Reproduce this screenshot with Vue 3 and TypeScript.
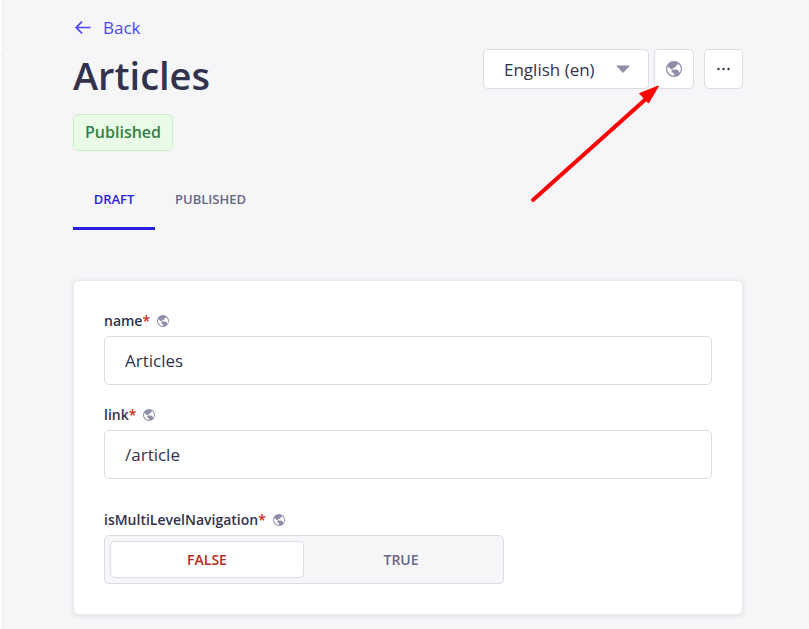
<script setup lang="ts">
import { defineComponent, h, ref } from 'vue'

const GlobeIcon = defineComponent({
  setup: () => () =>
    h('svg', { class: 'globe', viewBox: '0 0 24 24', 'aria-hidden': 'true' }, [
      h('path', {
        fill: 'currentColor',
        'fill-rule': 'evenodd',
        d: 'M12 0a12 12 0 1 0 0 24a12 12 0 0 0 0-24Z M2.7 8.2L8 12.7L10.8 12.4V10.2L14.2 9.4L15 7L17.6 5.8V3.6A10.2 10.2 0 0 1 20.4 17.8L19.2 15.2L16.6 12.8L10.4 13.2L8.4 14.4L8.6 16.6L12 18.8L12.4 22A10.2 10.2 0 0 1 2.7 8.2Z',
      }),
    ]),
})

const locale = ref('en')
const activeTab = ref('draft')
const tabs = [
  { id: 'draft', label: 'DRAFT' },
  { id: 'published', label: 'PUBLISHED' },
]
const fields = ref([
  { id: 'name', value: 'Articles' },
  { id: 'link', value: '/article' },
])
const multiLevel = ref(false)
</script>

<template>
  <div class="shell">
    <aside class="rail"><hr /></aside>
    <main class="page">
      <a class="back" href="#">
        <svg viewBox="0 0 16 14" aria-hidden="true"><path d="M15.5 6.5H1.5M7 .7L1.2 6.5L7 12.3" /></svg>
        <span>Back</span>
      </a>
      <header class="header">
        <h1>Articles</h1>
        <div class="actions">
          <div class="locale">
            <select v-model="locale" aria-label="Locale">
              <option value="en">English (en)</option>
            </select>
            <svg class="caret" viewBox="0 0 14 8" aria-hidden="true"><path d="M0 .5H14L7 8Z" /></svg>
          </div>
          <button class="square" type="button" aria-label="Translate"><GlobeIcon /></button>
          <button class="square more" type="button" aria-label="More actions">
            <svg viewBox="0 0 14 4" aria-hidden="true">
              <circle cx="1.5" cy="2" r="1.2" /><circle cx="6.5" cy="2" r="1.2" /><circle cx="11.5" cy="2" r="1.2" />
            </svg>
          </button>
          <svg class="pointer" viewBox="0 0 130 120" aria-hidden="true">
            <path class="shaft" d="M4 115L118 13" />
            <path class="head" d="M129.5 1L119.5 18L110.5 8.5Z" />
          </svg>
        </div>
      </header>
      <span class="status">Published</span>
      <div class="tabs" role="tablist">
        <button
          v-for="tab in tabs"
          :key="tab.id"
          type="button"
          role="tab"
          :aria-selected="activeTab === tab.id"
          :class="{ active: activeTab === tab.id }"
          @click="activeTab = tab.id"
        >{{ tab.label }}</button>
      </div>
      <form class="card" @submit.prevent>
        <div v-for="field in fields" :key="field.id" class="field">
          <div class="caption">
            <label :for="field.id">{{ field.id }}<span class="required">*</span></label>
            <GlobeIcon />
          </div>
          <input :id="field.id" v-model="field.value" type="text" required />
        </div>
        <div class="field toggle-field">
          <div class="caption">
            <span id="multi-label">isMultiLevelNavigation<span class="required">*</span></span>
            <GlobeIcon />
          </div>
          <div class="toggle" role="group" aria-labelledby="multi-label">
            <button type="button" :class="{ off: !multiLevel }" :aria-pressed="!multiLevel" @click="multiLevel = false">FALSE</button>
            <button type="button" :class="{ on: multiLevel }" :aria-pressed="multiLevel" @click="multiLevel = true">TRUE</button>
          </div>
        </div>
      </form>
    </main>
  </div>
</template>

<style>
body {
  background: #f6f6f9;
}
</style>

<style scoped>
.shell {
  display: flex;
  min-height: 100vh;
  color: #32324d;
  font-family: "Open Sans", "Noto Sans", sans-serif;
  font-size: 17px;
}
.shell * {
  box-sizing: border-box;
}
button,
select,
input {
  font: inherit;
  color: inherit;
}
.rail {
  width: 3px;
  background: #fff;
  border-right: 1px solid #eaeaef;
}
.rail hr {
  height: 1px;
  margin: 54px 0 0;
  border: 0;
  background: #eaeaef;
}
.page {
  flex: 1;
  min-width: 0;
  padding: 16px 66px 14px 70px;
}
.back {
  display: flex;
  width: max-content;
  align-items: center;
  gap: 12px;
  padding-left: 2px;
  line-height: 24px;
  color: #4945ff;
  text-decoration: none;
}
.back svg {
  width: 16px;
  height: 14px;
  fill: none;
  stroke: currentColor;
  stroke-width: 1.7;
}
.header {
  display: flex;
  justify-content: space-between;
  align-items: flex-start;
  padding-top: 9px;
}
h1 {
  margin: 0;
  font-size: 38px;
  font-weight: 600;
  line-height: 52px;
}
.actions {
  position: relative;
  display: flex;
}
.locale {
  position: relative;
  margin-right: 5px;
}
.locale select {
  width: 166px;
  height: 40px;
  padding: 0 20px;
  appearance: none;
  background: #fff;
  border: 1px solid #dcdce4;
  border-radius: 5px;
}
.caret {
  position: absolute;
  top: 16px;
  right: 19px;
  width: 14px;
  height: 8px;
  fill: #8e8ea9;
  pointer-events: none;
}
.square {
  display: flex;
  width: 40px;
  height: 40px;
  padding: 0;
  align-items: center;
  justify-content: center;
  background: #fff;
  border: 1px solid #dcdce4;
  border-radius: 5px;
}
.more {
  width: 39px;
  margin-left: 10px;
}
.more svg {
  width: 14px;
  height: 4px;
  fill: #32324d;
}
.globe {
  flex: none;
  width: 12px;
  height: 12px;
  color: #8e8ea9;
}
.square .globe {
  width: 16px;
  height: 16px;
}
.pointer {
  position: absolute;
  top: 36px;
  right: 84px;
  width: 130px;
  height: 120px;
  pointer-events: none;
}
.shaft {
  fill: none;
  stroke: #f00;
  stroke-width: 4;
  stroke-linecap: round;
}
.head {
  fill: #f00;
  stroke: #f00;
}
.status {
  display: block;
  width: max-content;
  margin-top: 13px;
  padding: 0 11px;
  border: 1px solid #c6f0c2;
  border-radius: 5px;
  background: #eafbe7;
  color: #328048;
  font-size: 16px;
  font-weight: 600;
  line-height: 35px;
}
.tabs {
  display: flex;
  margin-top: 19px;
}
.tabs button {
  min-width: 82px;
  height: 60px;
  padding: 0 20px;
  border: 0;
  border-bottom: 3px solid transparent;
  background: none;
  color: #666687;
  font-size: 13px;
  font-weight: 600;
}
.tabs button.active {
  border-color: #271fe0;
  color: #271fe0;
}
.card {
  margin-top: 50px;
  padding: 30px;
  border: 1px solid #eaeaef;
  border-radius: 5px;
  background: #fff;
  box-shadow: 0 1px 5px rgba(33, 33, 52, 0.1);
}
.field + .field {
  margin-top: 20px;
}
.field.toggle-field {
  margin-top: 31px;
}
.caption {
  display: flex;
  align-items: center;
  gap: 7px;
  margin-bottom: 5px;
  font-size: 14px;
  font-weight: 600;
  line-height: 20px;
}
.required {
  color: #d02b20;
}
input {
  display: block;
  width: 100%;
  height: 49px;
  padding: 0 20px;
  border: 1px solid #dcdce4;
  border-radius: 5px;
  background: #fff;
}
.toggle {
  display: flex;
  max-width: 400px;
  height: 49px;
  padding: 5px;
  border: 1px solid #dcdce4;
  border-radius: 5px;
  background: #f6f6f9;
}
.toggle button {
  flex: 1;
  border: 1px solid transparent;
  border-radius: 5px;
  background: none;
  color: #666687;
  font-size: 14px;
  font-weight: 600;
}
.toggle button.off,
.toggle button.on {
  border-color: #dcdce4;
  background: #fff;
}
.toggle button.off {
  color: #b72b1a;
}
.toggle button.on {
  color: #4945ff;
}
</style>
